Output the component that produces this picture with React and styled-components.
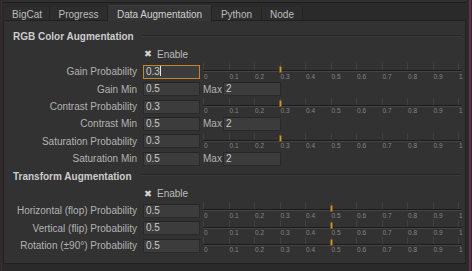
import React from 'react';
import styled, { createGlobalStyle } from 'styled-components';

const GlobalStyle = createGlobalStyle`
  html, body { margin: 0; padding: 0; background: #2a2a2a; }
  body { font-family: "Liberation Sans", Arial, sans-serif; }
  * { box-sizing: border-box; }
`;

const Frame = styled.div`
  width: 472px;
  height: 271px;
  padding: 0 1px;
  display: flex;
  background: #2a2a2a;
  overflow: hidden;
`;

const Window = styled.div`
  flex: 1;
  display: flex;
  flex-direction: column;
  border-left: 1px solid #3e2b35;
  border-right: 2px solid #6a2d50;
  padding: 0 3px 0 1px;
`;

const TopStrip = styled.div`
  height: 3px;
  background: #2f2f2f;
  border-bottom: 1px solid #1d1d1d;
  margin-bottom: 3px;
`;

const TabBar = styled.div`
  display: flex;
  height: 14px;
  padding-left: 2px;
  position: relative;
  z-index: 1;
`;

const Tab = styled.div`
  width: ${p => p.$w}px;
  height: ${p => (p.$active ? 16 : 14)}px;
  margin-top: ${p => (p.$active ? -1 : 0)}px;
  background: ${p => (p.$active ? '#353535' : '#2d2d2d')};
  border-right: 1px solid #232323;
  border-top: 1px solid ${p => (p.$active ? '#3c3c3c' : '#2a2a2a')};
  color: ${p => (p.$active ? '#d0d0d0' : '#bdbdbd')};
  font-size: 10px;
  line-height: ${p => (p.$active ? 16 : 14)}px;
  padding-top: 1px;
  text-align: center;
  white-space: nowrap;
`;

const Panel = styled.div`
  background: #323232;
  border: 1px solid #202020;
  padding: 7.3px 3px 8.5px 0;
`;

const Row = styled.div`
  display: grid;
  grid-template-columns: 139px 57px 1fr;
  height: 17.4px;
  align-items: center;
`;

const Label = styled.div`
  text-align: right;
  padding-right: 6px;
  color: #b2b2b2;
  font-size: 10px;
  white-space: nowrap;
`;

const SectionTitle = styled.div`
  padding-left: 9px;
  color: #cccccc;
  font-size: 10px;
  font-weight: bold;
  white-space: nowrap;
`;

const Rule = styled.div`
  grid-column: 2 / 4;
  height: 1px;
  margin-left: -1px;
  margin-top: -3px;
  background: #262626;
  box-shadow: 0 1px 0 #3a3a3a;
`;

const Check = styled.div`
  display: flex;
  align-items: center;
  gap: 5px;
  padding-left: 1px;
  color: #bcbcbc;
  font-size: 10px;
  white-space: nowrap;
`;

const CheckMark = styled.span`
  font-family: "DejaVu Sans", sans-serif;
  font-size: 9.5px;
  line-height: 10px;
  color: #d4d4d4;
  width: 8px;
`;

const Field = styled.div`
  height: 14px;
  width: ${p => p.$w || 57}px;
  background: #3c3c3c;
  border: 1px solid ${p => (p.$focus ? '#c4862c' : '#2a2a2a')};
  border-top-color: ${p => (p.$focus ? '#c4862c' : '#252525')};
  color: #cacaca;
  font-size: 10px;
  line-height: 12px;
  padding-left: 2px;
  white-space: nowrap;
`;

const Caret = styled.span`
  display: inline-block;
  width: 1px;
  height: 10px;
  background: #e8e8e8;
  vertical-align: -1px;
`;

const MaxGroup = styled.div`
  display: flex;
  align-items: center;
  padding-left: 3px;
`;

const MaxLabel = styled.span`
  width: 20px;
  color: #b2b2b2;
  font-size: 10px;
`;

const SliderBox = styled.div`
  position: relative;
  height: 17.4px;
  margin-left: 3px;
`;

const Tick = styled.div`
  position: absolute;
  top: 0;
  width: 1px;
  height: 7px;
  background: #404040;
`;

const Track = styled.div`
  position: absolute;
  left: 0;
  right: 0;
  top: 7px;
  height: 2px;
  background: #1b1b1b;
  border-bottom: 1px solid #454545;
`;

const Handle = styled.div`
  position: absolute;
  top: 2.5px;
  width: 3px;
  height: 7px;
  background: #c99a38;
  border: 1px solid #7a5a1e;
  border-radius: 1px;
`;

const ScaleNum = styled.span`
  position: absolute;
  top: 10.5px;
  font-size: 6.5px;
  line-height: 6.5px;
  color: #858585;
  white-space: nowrap;
`;

const SCALE = 255;
const stops = [0, 0.1, 0.2, 0.3, 0.4, 0.5, 0.6, 0.7, 0.8, 0.9, 1];

function Slider({ value }) {
  return (
    <SliderBox>
      {stops.map(s => (
        <Tick key={'t' + s} style={{ left: s * SCALE }} />
      ))}
      <Track />
      {stops.map(s => (
        <ScaleNum key={'n' + s} style={{ left: s * SCALE + 1 }}>
          {String(s)}
        </ScaleNum>
      ))}
      <Handle style={{ left: value * SCALE - 1 }} />
    </SliderBox>
  );
}

function ProbRow({ label, value, focus }) {
  return (
    <Row>
      <Label>{label}</Label>
      <Field $focus={focus}>
        {value}
        {focus && <Caret />}
      </Field>
      <Slider value={parseFloat(value)} />
    </Row>
  );
}

function MinRow({ label, value, max }) {
  return (
    <Row>
      <Label>{label}</Label>
      <Field>{value}</Field>
      <MaxGroup>
        <MaxLabel>Max</MaxLabel>
        <Field $w={58}>{max}</Field>
      </MaxGroup>
    </Row>
  );
}

function Section({ title }) {
  return (
    <Row>
      <SectionTitle>{title}</SectionTitle>
      <Rule />
    </Row>
  );
}

function EnableRow() {
  return (
    <Row>
      <div />
      <Check>
        <CheckMark>✖</CheckMark>
        Enable
      </Check>
    </Row>
  );
}

const tabs = [
  { name: 'BigCat', w: 45 },
  { name: 'Progress', w: 58 },
  { name: 'Data Augmentation', w: 104, active: true },
  { name: 'Python', w: 50 },
  { name: 'Node', w: 41 },
];

export default function App() {
  return (
    <>
      <GlobalStyle />
      <Frame>
        <Window>
          <TopStrip />
          <TabBar>
            {tabs.map(t => (
              <Tab key={t.name} $w={t.w} $active={t.active}>
                {t.name}
              </Tab>
            ))}
          </TabBar>
          <Panel>
            <Section title="RGB Color Augmentation" />
            <EnableRow />
            <ProbRow label="Gain Probability" value="0.3" focus />
            <MinRow label="Gain Min" value="0.5" max="2" />
            <ProbRow label="Contrast Probability" value="0.3" />
            <MinRow label="Contrast Min" value="0.5" max="2" />
            <ProbRow label="Saturation Probability" value="0.3" />
            <MinRow label="Saturation Min" value="0.5" max="2" />
            <Section title="Transform Augmentation" />
            <EnableRow />
            <ProbRow label="Horizontal (flop) Probability" value="0.5" />
            <ProbRow label="Vertical (flip) Probability" value="0.5" />
            <ProbRow label="Rotation (±90°) Probability" value="0.5" />
          </Panel>
        </Window>
      </Frame>
    </>
  );
}
